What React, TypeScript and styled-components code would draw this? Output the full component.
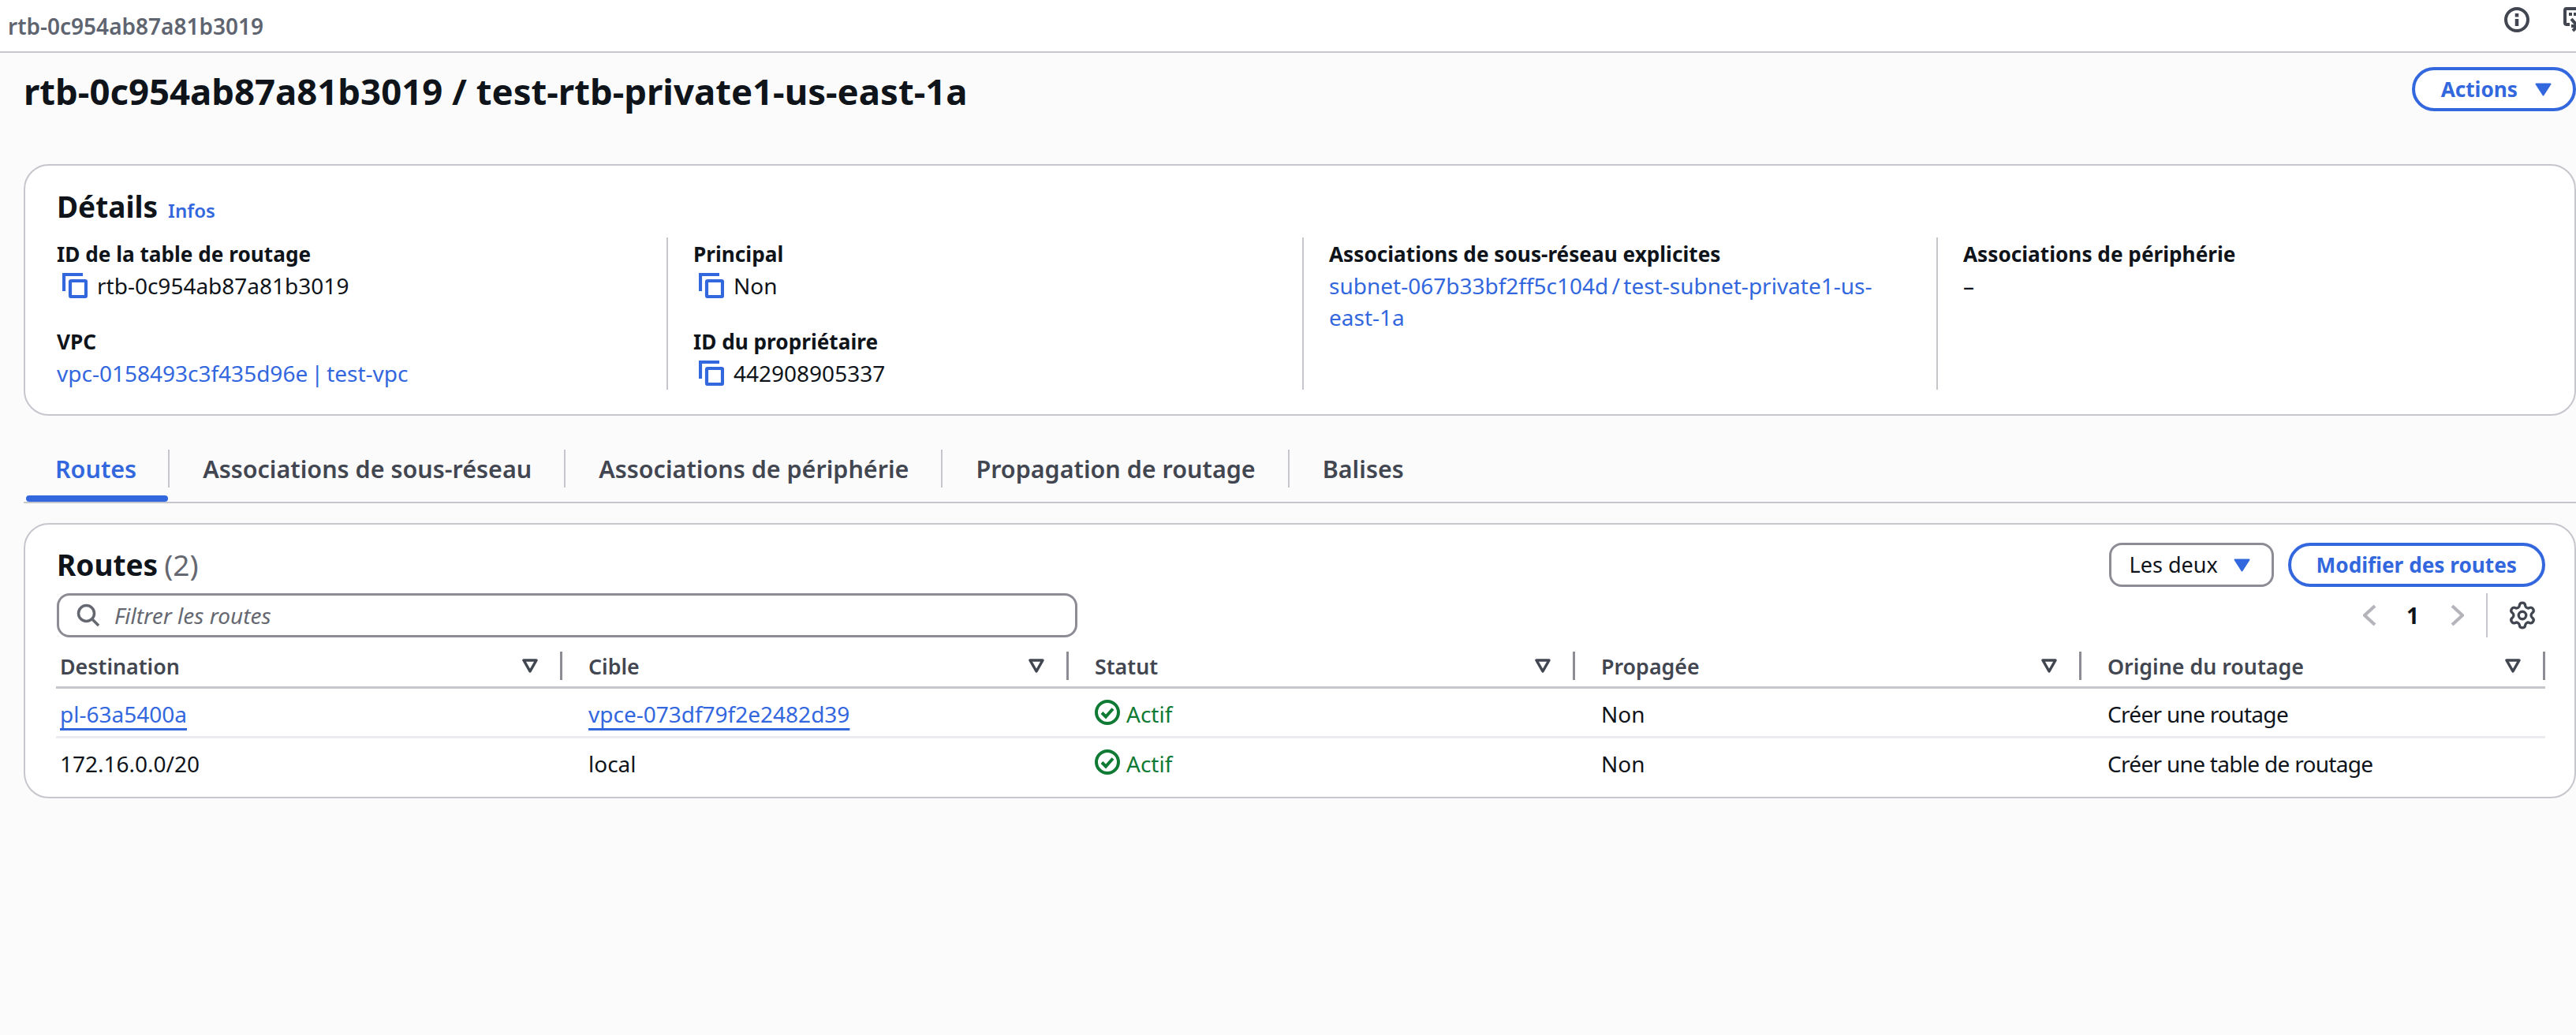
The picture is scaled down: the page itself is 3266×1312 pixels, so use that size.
import React from 'react';
import styled, { createGlobalStyle } from 'styled-components';
import { Settings } from 'lucide-react';

const BLUE = '#3367de';
const INK = '#0f141a';
const SLATE = '#424650';
const LINE = '#c6c6cd';
const GREEN = '#0e7a34';

const GlobalStyle = createGlobalStyle`
    html, body {
        margin: 0;
        padding: 0;
        background: #fbfbfb;
    }
    body {
        font-family: "Noto Sans", "Open Sans", sans-serif;
        font-size: 28px;
        line-height: 40px;
        color: ${INK};
        overflow: hidden;
    }
`;

const Page = styled.div`
    width: 3266px;
    height: 1312px;
    overflow: hidden;
    background: #fbfbfb;
`;

const TopBar = styled.header`
    height: 65px;
    box-sizing: content-box;
    display: flex;
    align-items: center;
    justify-content: space-between;
    padding-left: 10px;
    background: #fff;
    border-bottom: 2px solid ${LINE};
`;

const TopTitle = styled.div`
    font-size: 28px;
    font-weight: 600;
    color: #5f6570;
`;

const TopIcons = styled.div`
    display: flex;
    align-items: center;
    gap: 43px;
    margin-right: -16px;
    margin-top: -16px;
`;

const Content = styled.main`
    padding-left: 30px;
`;

const PageHeader = styled.div`
    display: flex;
    justify-content: space-between;
    align-items: flex-start;
    padding-top: 18px;
    height: 141px;
    box-sizing: border-box;
`;

const PageTitle = styled.h1`
    margin: 0;
    font-size: 45.5px;
    line-height: 60px;
    font-weight: 700;
`;

const PillButton = styled.button<{ $caret?: boolean }>`
    display: inline-flex;
    align-items: center;
    justify-content: center;
    gap: 22px;
    height: 56px;
    box-sizing: border-box;
    padding: ${(p) => (p.$caret ? '0 27px 0 33px' : '0 32px')};
    border: 4px solid ${BLUE};
    border-radius: 28px;
    background: #fff;
    color: ${BLUE};
    font-family: inherit;
    font-size: 26.2px;
    font-weight: 700;
    white-space: nowrap;
`;

const Card = styled.section`
    box-sizing: border-box;
    background: #fff;
    border: 2px solid ${LINE};
    border-radius: 32px;
`;

const DetailsCard = styled(Card)`
    height: 319px;
    padding: 28px 0 0 40px;
`;

const SectionTitle = styled.h2`
    display: flex;
    align-items: baseline;
    gap: 8px;
    height: 48px;
    margin: 0;
    font-size: 37px;
    line-height: 48px;
    font-weight: 700;
`;

const InfoLink = styled.a`
    margin-left: 5px;
    font-size: 24px;
    font-weight: 600;
    color: ${BLUE};
`;

const Columns = styled.div`
    display: grid;
    grid-template-columns: 773px 806px 804px 1fr;
    margin-top: 15px;
    height: 193px;
`;

const Column = styled.div<{ $first?: boolean }>`
    display: flex;
    flex-direction: column;
    gap: 31px;
    padding: 1px 34px 0 ${(p) => (p.$first ? '0' : '32px')};
    border-left: ${(p) => (p.$first ? 'none' : `2px solid ${LINE}`)};
`;

const Label = styled.div`
    font-size: 26.2px;
    font-weight: 700;
`;

const CopyValue = styled.div`
    display: flex;
    align-items: center;
    gap: 12px;
    padding-left: 7px;
`;

const Link = styled.a`
    color: ${BLUE};
    word-spacing: -3px;
`;

const Tabs = styled.nav`
    display: flex;
    margin-top: 43px;
    height: 66px;
    border-bottom: 2px solid ${LINE};
    box-sizing: content-box;
`;

const Tab = styled.div<{ $active?: boolean; $last?: boolean }>`
    position: relative;
    height: 48px;
    display: flex;
    align-items: center;
    padding: ${(p) => (p.$active ? '0 40px' : '0 41px 0 42px')};
    font-size: 30.5px;
    font-weight: 600;
    white-space: nowrap;
    color: ${(p) => (p.$active ? BLUE : SLATE)};
    border-right: ${(p) => (p.$last ? 'none' : `2px solid ${LINE}`)};
    &::after {
        content: '';
        display: ${(p) => (p.$active ? 'block' : 'none')};
        position: absolute;
        left: 3px;
        right: 0;
        top: 58px;
        height: 8px;
        border-radius: 4px;
        background: ${BLUE};
    }
`;

const RoutesCard = styled(Card)`
    margin-top: 25px;
    height: 349px;
    padding: 23px 37px 0 40px;
`;

const ActionRow = styled.div`
    display: flex;
    align-items: center;
    justify-content: space-between;
    height: 56px;
`;

const Count = styled.span`
    font-weight: 400;
    color: #656871;
`;

const ActionGroup = styled.div`
    display: flex;
    gap: 18px;
`;

const SelectBox = styled.div`
    display: flex;
    align-items: center;
    justify-content: space-between;
    width: 209px;
    height: 56px;
    box-sizing: border-box;
    padding: 0 27px 0 23px;
    border: 3px solid #8c8c94;
    border-radius: 16px;
    background: #fff;
    font-size: 27px;
`;

const FilterRow = styled(ActionRow)`
    margin-top: 8px;
`;

const SearchBox = styled.div`
    display: flex;
    align-items: center;
    gap: 18px;
    width: 1294px;
    height: 56px;
    box-sizing: border-box;
    padding-left: 22px;
    border: 3px solid #8c8c94;
    border-radius: 16px;
    background: #fff;
`;

const Placeholder = styled.span`
    font-style: italic;
    color: #656871;
`;

const Pager = styled.div`
    display: flex;
    align-items: center;
    height: 56px;
    padding-right: 10px;
`;

const PageNumber = styled.span`
    width: 12px;
    margin: 0 44px 0 38px;
    font-weight: 700;
`;

const PagerDivider = styled.span`
    width: 2px;
    height: 56px;
    margin: 0 25px 0 28px;
    background: ${LINE};
`;

const Table = styled.div`
    margin-top: 14px;
    margin-left: -1px;
`;

const Row = styled.div<{ $head?: boolean; $last?: boolean }>`
    display: grid;
    grid-template-columns: 642px 642px 642px 642px 588px;
    box-sizing: content-box;
    height: ${(p) => (p.$head ? '48px' : '60px')};
    border-bottom: ${(p) => (p.$head ? `3px solid ${LINE}` : p.$last ? 'none' : '3px solid #ebebf0')};
`;

const HeadCell = styled.div<{ $first?: boolean }>`
    display: flex;
    align-items: center;
    justify-content: space-between;
    padding-left: ${(p) => (p.$first ? '5px' : '33px')};
    padding-bottom: 2px;
    font-size: 26.8px;
    font-weight: 600;
    color: ${SLATE};
`;

const HeadTools = styled.div`
    display: flex;
    align-items: center;
    gap: 28px;
    margin-top: -2px;
`;

const HeadDivider = styled.span`
    width: 3px;
    height: 36px;
    background: #8c8c94;
`;

const Cell = styled.div<{ $first?: boolean; $tight?: boolean }>`
    display: flex;
    align-items: center;
    padding-top: 3px;
    padding-left: ${(p) => (p.$first ? '5px' : '33px')};
    letter-spacing: ${(p) => (p.$tight ? '-0.7px' : 'normal')};
`;

const TableLink = styled.a`
    color: ${BLUE};
    text-decoration: underline;
    text-decoration-thickness: 3px;
    text-underline-offset: 7px;
`;

const Status = styled.span`
    display: inline-flex;
    align-items: center;
    gap: 8px;
    color: ${GREEN};
    svg {
        margin-top: -3px;
    }
`;

const CopyIcon = () => (
    <svg width="32" height="32" viewBox="0 0 32 32" fill="none" stroke={BLUE} strokeWidth="4.2">
        <path d="M2 23V2h24" />
        <rect x="10" y="10" width="20" height="20" rx="1" />
    </svg>
);

const SortIcon = () => (
    <svg width="20" height="18" viewBox="0 0 20 18" fill="none" stroke={SLATE} strokeWidth="3.5" strokeLinejoin="round">
        <path d="M2 2h16l-8 14z" />
    </svg>
);

const CaretIcon = () => (
    <svg width="21" height="17" viewBox="0 0 21 17" fill={BLUE} stroke={BLUE} strokeWidth="2" strokeLinejoin="round">
        <path d="M1.5 1.5h18l-9 14z" />
    </svg>
);

const SearchIcon = () => (
    <svg width="30" height="30" viewBox="0 0 30 30" fill="none" stroke="#656871" strokeWidth="3.5">
        <circle cx="12.5" cy="12.5" r="10" />
        <path d="M20 20l8 8" />
    </svg>
);

const ChevronIcon = ({ right }: { right?: boolean }) => (
    <svg width="17" height="26" viewBox="0 0 17 26" fill="none" stroke="#b4b4bb" strokeWidth="4">
        <path d={right ? 'M2 1l13 12L2 25' : 'M15 1L2 13l13 12'} />
    </svg>
);

const StatusIcon = () => (
    <svg width="32" height="32" viewBox="0 0 32 32" fill="none" stroke={GREEN} strokeWidth="4">
        <circle cx="16" cy="16" r="14" />
        <path d="M9 16.5l5 5 9-10" />
    </svg>
);

const InfoIcon = () => (
    <svg width="32" height="32" viewBox="0 0 32 32" fill="none" stroke={SLATE} strokeWidth="4">
        <circle cx="16" cy="16" r="14" />
        <path d="M16 8v4.5M16 15v9" strokeWidth="4.5" />
    </svg>
);

const ExportIcon = () => (
    <svg width="32" height="32" viewBox="0 0 32 32" fill="none" stroke={SLATE} strokeWidth="4">
        <path d="M8 22H4a2 2 0 0 1-2-2V4a2 2 0 0 1 2-2h24v12" />
        <path d="M7 7h4v4H7zM13 7h4v4h-4z" fill={SLATE} stroke="none" />
        <path d="M10 24h8M10 15l8 9-6 6" />
    </svg>
);

const headers = ['Destination', 'Cible', 'Statut', 'Propagée', 'Origine du routage'];

export default function App() {
    return (
        <Page>
            <GlobalStyle />
            <TopBar>
                <TopTitle>rtb-0c954ab87a81b3019</TopTitle>
                <TopIcons>
                    <InfoIcon />
                    <ExportIcon />
                </TopIcons>
            </TopBar>
            <Content>
                <PageHeader>
                    <PageTitle>rtb-0c954ab87a81b3019 / test-rtb-private1-us-east-1a</PageTitle>
                    <PillButton $caret>Actions <CaretIcon /></PillButton>
                </PageHeader>
                <DetailsCard>
                    <SectionTitle>Détails<InfoLink>Infos</InfoLink></SectionTitle>
                    <Columns>
                        <Column $first>
                            <div>
                                <Label>ID de la table de routage</Label>
                                <CopyValue><CopyIcon />rtb-0c954ab87a81b3019</CopyValue>
                            </div>
                            <div>
                                <Label>VPC</Label>
                                <Link>vpc-0158493c3f435d96e | test-vpc</Link>
                            </div>
                        </Column>
                        <Column>
                            <div>
                                <Label>Principal</Label>
                                <CopyValue><CopyIcon />Non</CopyValue>
                            </div>
                            <div>
                                <Label>ID du propriétaire</Label>
                                <CopyValue><CopyIcon />442908905337</CopyValue>
                            </div>
                        </Column>
                        <Column>
                            <div>
                                <Label>Associations de sous-réseau explicites</Label>
                                <Link>subnet-067b33bf2ff5c104d / test-subnet-private1-us-east-1a</Link>
                            </div>
                        </Column>
                        <Column>
                            <div>
                                <Label>Associations de périphérie</Label>
                                <div>–</div>
                            </div>
                        </Column>
                    </Columns>
                </DetailsCard>
                <Tabs>
                    <Tab $active>Routes</Tab>
                    <Tab>Associations de sous-réseau</Tab>
                    <Tab>Associations de périphérie</Tab>
                    <Tab>Propagation de routage</Tab>
                    <Tab $last>Balises</Tab>
                </Tabs>
                <RoutesCard>
                    <ActionRow>
                        <SectionTitle>Routes <Count>(2)</Count></SectionTitle>
                        <ActionGroup>
                            <SelectBox>Les deux <CaretIcon /></SelectBox>
                            <PillButton>Modifier des routes</PillButton>
                        </ActionGroup>
                    </ActionRow>
                    <FilterRow>
                        <SearchBox>
                            <SearchIcon />
                            <Placeholder>Filtrer les routes</Placeholder>
                        </SearchBox>
                        <Pager>
                            <ChevronIcon />
                            <PageNumber>1</PageNumber>
                            <ChevronIcon right />
                            <PagerDivider />
                            <Settings size={38} color={SLATE} strokeWidth={2.1} />
                        </Pager>
                    </FilterRow>
                    <Table>
                        <Row $head>
                            {headers.map((h, i) => (
                                <HeadCell key={h} $first={i === 0}>
                                    {h}
                                    <HeadTools>
                                        <SortIcon />
                                        <HeadDivider />
                                    </HeadTools>
                                </HeadCell>
                            ))}
                        </Row>
                        <Row>
                            <Cell $first><TableLink>pl-63a5400a</TableLink></Cell>
                            <Cell><TableLink>vpce-073df79f2e2482d39</TableLink></Cell>
                            <Cell><Status><StatusIcon />Actif</Status></Cell>
                            <Cell>Non</Cell>
                            <Cell $tight>Créer une routage</Cell>
                        </Row>
                        <Row $last>
                            <Cell $first>172.16.0.0/20</Cell>
                            <Cell>local</Cell>
                            <Cell><Status><StatusIcon />Actif</Status></Cell>
                            <Cell>Non</Cell>
                            <Cell $tight>Créer une table de routage</Cell>
                        </Row>
                    </Table>
                </RoutesCard>
            </Content>
        </Page>
    );
}
